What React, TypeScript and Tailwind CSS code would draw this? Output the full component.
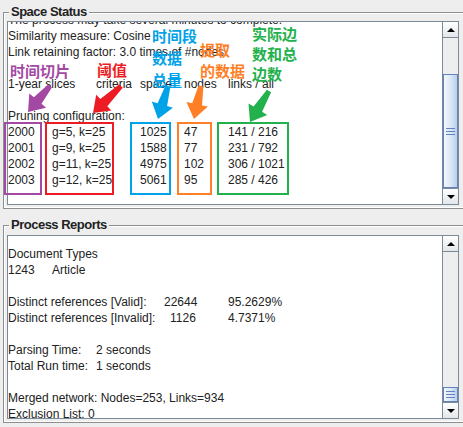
import React from 'react';

type Pt = [number, number];

// fat tapered arrow, like the ones from a screenshot annotation tool
function arrowPoints(tail: Pt, tip: Pt, head = 11, headLen = 15, shaft = 5, tailW = 2.5) {
  const dx = tip[0] - tail[0];
  const dy = tip[1] - tail[1];
  const len = Math.hypot(dx, dy);
  const ux = dx / len;
  const uy = dy / len;
  const nx = -uy;
  const ny = ux;
  const bx = tip[0] - ux * headLen;
  const by = tip[1] - uy * headLen;
  const pts: Pt[] = [
    [tail[0] + nx * tailW, tail[1] + ny * tailW],
    [bx + nx * shaft, by + ny * shaft],
    [bx + nx * head, by + ny * head],
    tip,
    [bx - nx * head, by - ny * head],
    [bx - nx * shaft, by - ny * shaft],
    [tail[0] - nx * tailW, tail[1] - ny * tailW],
  ];
  return pts.map((p) => p.map((v) => v.toFixed(1)).join(',')).join(' ');
}

const arrows: { tail: Pt; tip: Pt; color: string }[] = [
  { tail: [50, 86], tip: [28, 112], color: '#a349a4' },
  { tail: [121, 86], tip: [93, 113], color: '#ed1c24' },
  { tail: [168, 86], tip: [158, 119], color: '#00a2e8' },
  { tail: [201, 86], tip: [194, 119], color: '#ff7f27' },
  { tail: [269, 91], tip: [250, 122], color: '#22b14c' },
];

const boxes = [
  { x: 5, w: 36, color: '#a349a4' },
  { x: 46, w: 67, color: '#ed1c24' },
  { x: 131, w: 39, color: '#00a2e8' },
  { x: 178, w: 33, color: '#ff7f27' },
  { x: 218, w: 70, color: '#22b14c' },
];

function Triangle({ up }: { up?: boolean }) {
  return up ? (
    <div className="w-0 h-0 border-l-[4px] border-r-[4px] border-b-[4px] border-l-transparent border-r-transparent border-b-black" />
  ) : (
    <div className="w-0 h-0 border-l-[4px] border-r-[4px] border-t-[4px] border-l-transparent border-r-transparent border-t-black" />
  );
}

function ScrollBar({ thumbH }: { thumbH: number }) {
  return (
    <div className="w-[16px] h-full shrink-0 flex flex-col border-l border-[#7a8a99] bg-[#eeeeee]">
      <div className="h-[16px] shrink-0 border-b border-[#7a8a99] bg-gradient-to-b from-white to-[#e3e6ea] flex items-center justify-center">
        <Triangle up />
      </div>
      <div className="flex-1 flex flex-col justify-end">
        <div
          className={`${thumbH > 40 ? 'h-[114px]' : 'h-[15px]'} border border-[#6382bf] bg-gradient-to-r from-[#f2f7fc] via-[#dbe8f6] to-[#b9d0ea] flex flex-col items-center justify-center gap-[2px]`}
        >
          <div className="w-[9px] h-px bg-[#6382bf]" />
          <div className="w-[9px] h-px bg-[#6382bf]" />
          <div className="w-[9px] h-px bg-[#6382bf]" />
        </div>
      </div>
      <div className="h-[16px] shrink-0 border-t border-[#7a8a99] bg-gradient-to-b from-white to-[#e3e6ea] flex items-center justify-center">
        <Triangle />
      </div>
    </div>
  );
}

function Panel({ title, children, className }: { title: string; children: React.ReactNode; className: string }) {
  return (
    <div className={`relative ml-[3px] w-[470px] border-l border-t border-b border-[#8e8e8e] ${className}`}>
      <div className="border-l border-t border-b border-white pl-[2px]">{children}</div>
      <div className="absolute left-[5px] top-[-9px] bg-[#eeeeee] px-[2px] text-[13px] leading-[16px] font-bold tracking-[-0.5px] text-[#222]">
        {title}
      </div>
    </div>
  );
}

function Line({ children }: { children?: React.ReactNode }) {
  return <div className="h-[16px] leading-[16px] whitespace-pre flex">{children ?? ' '}</div>;
}

export default function App() {
  return (
    <div className="relative w-[463px] h-[427px] overflow-hidden bg-[#eeeeee] font-['Liberation_Sans',Arial,sans-serif] text-[12px] text-[#222]">
      <Panel title="Space Status" className="mt-[12px] pt-0">
        <div className="pt-[7px] pb-[2px]">
          <div className="w-[452px] h-[184px] border border-[#7a8a99] bg-white flex">
            <div className="flex-1 overflow-hidden">
              <div className="mt-[-10px]">
                <Line>The process may take several minutes to complete.</Line>
                <Line>Similarity measure: Cosine</Line>
                <Line>Link retaining factor: 3.0 times of #nodes</Line>
                <Line />
                <Line>
                  <span className="w-[88px]">1-year slices</span>
                  <span className="w-[44px]">criteria</span>
                  <span className="w-[44px]">space</span>
                  <span className="w-[44px]">nodes</span>
                  <span>links / all</span>
                </Line>
                <Line />
                <Line>Pruning configuration:</Line>
                {[
                  ['2000', 'g=5, k=25', '1025', '47', '141 / 216'],
                  ['2001', 'g=9, k=25', '1588', '77', '231 / 792'],
                  ['2002', 'g=11, k=25', '4975', '102', '306 / 1021'],
                  ['2003', 'g=12, k=25', '5061', '95', '285 / 426'],
                ].map((r) => (
                  <Line key={r[0]}>
                    <span className="w-[44px]">{r[0]}</span>
                    <span className="w-[88px]">{r[1]}</span>
                    <span className="w-[44px]">{r[2]}</span>
                    <span className="w-[44px]">{r[3]}</span>
                    <span>{r[4]}</span>
                  </Line>
                ))}
              </div>
            </div>
            <ScrollBar thumbH={114} />
          </div>
        </div>
      </Panel>

      <Panel title="Process Reports" className="mt-[16px]">
        <div className="pt-[8px] pb-[2px]">
          <div className="w-[452px] h-[184px] border border-[#7a8a99] bg-white flex">
            <div className="flex-1 overflow-hidden">
              <div className="mt-[-6px]">
                <Line />
                <Line>Document Types</Line>
                <Line>
                  <span className="w-[44px]">1243</span>
                  <span>Article</span>
                </Line>
                <Line />
                <Line>
                  <span className="w-[156px]">Distinct references [Valid]:</span>
                  <span className="w-[64px]">22644</span>
                  <span>95.2629%</span>
                </Line>
                <Line>
                  <span className="w-[162px]">Distinct references [Invalid]:</span>
                  <span className="w-[58px]">1126</span>
                  <span>4.7371%</span>
                </Line>
                <Line />
                <Line>
                  <span className="w-[88px]">Parsing Time:</span>
                  <span>2 seconds</span>
                </Line>
                <Line>
                  <span className="w-[88px]">Total Run time:</span>
                  <span>1 seconds</span>
                </Line>
                <Line />
                <Line>Merged network: Nodes=253, Links=934</Line>
                <Line>Exclusion List: 0</Line>
              </div>
            </div>
            <ScrollBar thumbH={15} />
          </div>
        </div>
      </Panel>

      {/* annotations drawn over the screenshot */}
      <svg className="absolute left-0 top-0 pointer-events-none" width="463" height="427">
        {boxes.map((b) => (
          <rect key={b.color} x={b.x} y={123} width={b.w} height={71} fill="none" stroke={b.color} strokeWidth={2} />
        ))}
        {arrows.map((a) => (
          <polygon key={a.color} points={arrowPoints(a.tail, a.tip)} fill={a.color} />
        ))}
      </svg>

      <div className="absolute inset-0 pointer-events-none font-['Noto_Sans_CJK_SC',sans-serif] font-bold text-[15px]">
        <div className="absolute left-[10px] top-[61px] leading-[20px] text-[#a349a4]">时间切片</div>
        <div className="absolute left-[97px] top-[60px] leading-[20px] text-[#ed1c24]">阈值</div>
        <div className="absolute left-[152px] top-[25px] leading-[22px] text-[#00a2e8]">
          <div>时间段</div>
          <div>数据</div>
          <div>总量</div>
        </div>
        <div className="absolute left-[200px] top-[39px] leading-[21px] text-[#ff7f27]">
          <div>提取</div>
          <div>的数据</div>
        </div>
        <div className="absolute left-[252px] top-[24px] leading-[20px] text-[#22b14c]">
          <div>实际边</div>
          <div>数和总</div>
          <div>边数</div>
        </div>
      </div>
    </div>
  );
}
